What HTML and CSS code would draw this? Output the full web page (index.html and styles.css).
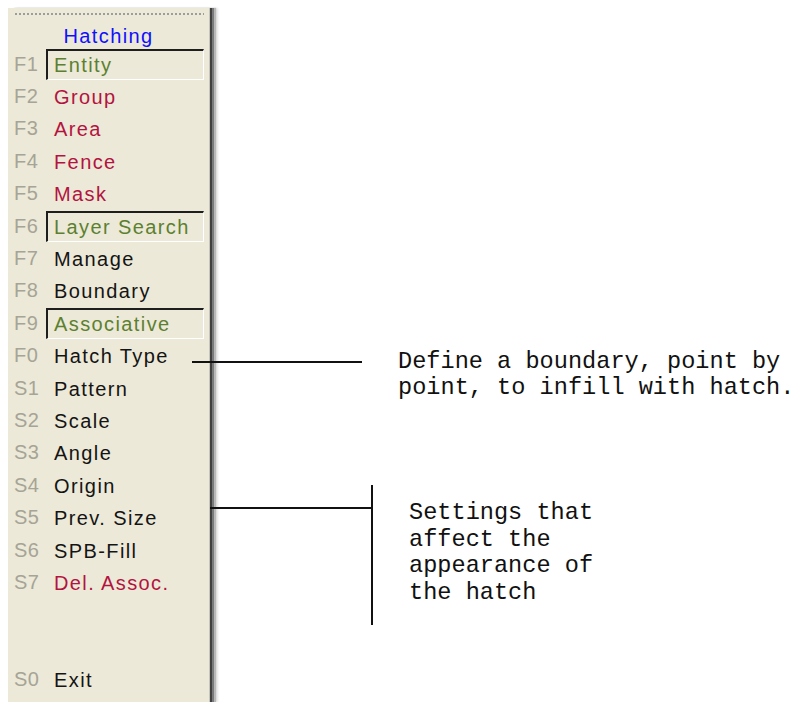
FILE: index.html
```html
<!DOCTYPE html>
<html lang="en">

<head>
    <meta charset="UTF-8">
    <title>Hatching menu</title>
    <link rel="stylesheet" href="styles.css">
</head>

<body>
    <div class="page">
        <div class="menu">
            <div class="grip"></div>
            <div class="menu-title">Hatching</div>
            <div class="row"><span class="key">F1</span><span class="item boxed toggle">Entity</span></div>
            <div class="row"><span class="key">F2</span><span class="item select">Group</span></div>
            <div class="row"><span class="key">F3</span><span class="item select">Area</span></div>
            <div class="row"><span class="key">F4</span><span class="item select">Fence</span></div>
            <div class="row"><span class="key">F5</span><span class="item select">Mask</span></div>
            <div class="row"><span class="key">F6</span><span class="item boxed toggle">Layer Search</span></div>
            <div class="row"><span class="key">F7</span><span class="item">Manage</span></div>
            <div class="row"><span class="key">F8</span><span class="item">Boundary</span></div>
            <div class="row"><span class="key">F9</span><span class="item boxed toggle">Associative</span></div>
            <div class="row"><span class="key">F0</span><span class="item">Hatch Type</span></div>
            <div class="row"><span class="key">S1</span><span class="item">Pattern</span></div>
            <div class="row"><span class="key">S2</span><span class="item">Scale</span></div>
            <div class="row"><span class="key">S3</span><span class="item">Angle</span></div>
            <div class="row"><span class="key">S4</span><span class="item">Origin</span></div>
            <div class="row"><span class="key">S5</span><span class="item">Prev. Size</span></div>
            <div class="row"><span class="key">S6</span><span class="item">SPB-Fill</span></div>
            <div class="row"><span class="key">S7</span><span class="item select">Del. Assoc.</span></div>
            <div class="row empty"></div>
            <div class="row empty"></div>
            <div class="row"><span class="key">S0</span><span class="item">Exit</span></div>
        </div>

        <!-- callouts -->
        <div class="leader boundary-line"></div>
        <p class="note boundary-note">Define a boundary, point by<br>point, to infill with hatch.</p>

        <div class="leader settings-line"></div>
        <div class="leader settings-bar"></div>
        <p class="note settings-note">Settings that<br>affect the<br>appearance of<br>the hatch</p>
    </div>
</body>

</html>
```

FILE: styles.css
```css
body {
    margin: 0;
    background-color: #ffffff;
}

.page {
    position: relative;
    height: 702px;
    padding: 8px 0 0 8px;
    box-sizing: border-box;
    overflow: hidden;
}

.menu {
    width: 202px;
    height: 694px;
    box-sizing: border-box;
    padding: 5px 0 0 6px;
    background-color: #ece9d8;
    border-right: 1px solid #c8c6bc;
    box-shadow: 2px 0 0 #404040, 4px 0 0 #7a7a7a, 6px 0 1px #b8b8b8, 8px 0 2px #e4e4e4;
    font-family: "Liberation Sans", Arial, sans-serif;
    font-size: 20px;
}

.grip {
    height: 2px;
    margin: 0 5px 0 1px;
    background: repeating-linear-gradient(to right, #9c9c9c 0 2px, transparent 2px 4px);
}

.menu-title {
    height: 33px;
    line-height: 42px;
    text-align: center;
    padding-right: 6px;
    color: #1010ff;
    letter-spacing: 1.4px;
}

.row {
    display: flex;
    align-items: center;
    height: 32.4px;
}

.key {
    width: 32px;
    color: #a6a496;
    letter-spacing: 0.5px;
}

.item {
    flex: 1;
    margin-right: 5px;
    height: 31px;
    line-height: 29px;
    box-sizing: border-box;
    padding-left: 6px;
    border: 2px solid transparent;
    border-width: 2px 1px 1px 2px;
    color: #141414;
    letter-spacing: 1.4px;
}

.item.boxed {
    border-color: #1e1e1e #ffffff #ffffff #1e1e1e;
}

.item.toggle {
    color: #5c8030;
}

.item.select {
    color: #b3143f;
}

.leader {
    position: absolute;
    background-color: #111111;
}

.boundary-line {
    left: 192px;
    top: 361px;
    width: 170px;
    height: 2px;
}

.settings-line {
    left: 210px;
    top: 507px;
    width: 163px;
    height: 2px;
}

.settings-bar {
    left: 371px;
    top: 485px;
    width: 2px;
    height: 140px;
}

.note {
    position: absolute;
    margin: 0;
    white-space: nowrap;
    font-family: "Liberation Mono", "Courier New", monospace;
    font-size: 23.6px;
    color: #111111;
}

.boundary-note {
    left: 398px;
    top: 349px;
    line-height: 26px;
}

.settings-note {
    left: 409px;
    top: 500px;
    line-height: 26.7px;
}
```
